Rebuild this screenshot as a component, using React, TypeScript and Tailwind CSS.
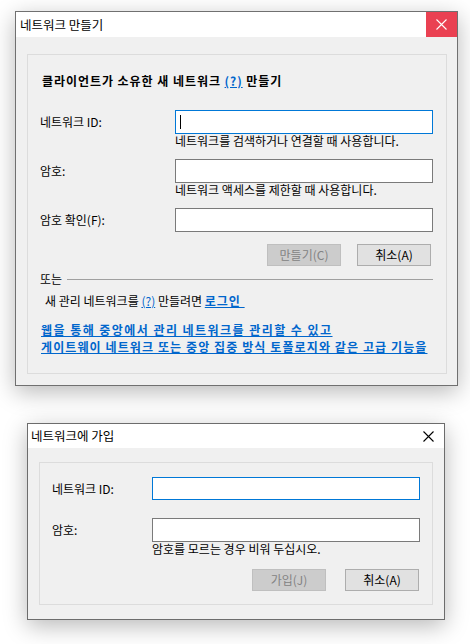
import React from "react";

const font = { fontFamily: '"Noto Sans CJK KR", "Noto Sans", sans-serif' };

function CloseGlyph({ color }: { color: string }) {
  return (
    <svg width="11" height="11" viewBox="0 0 11 11">
      <path d="M0.5 0.5 L10.5 10.5 M10.5 0.5 L0.5 10.5" stroke={color} strokeWidth="1.1" fill="none" />
    </svg>
  );
}

function Button({ label, disabled }: { label: string; disabled?: boolean }) {
  return (
    <div
      className={
        disabled
          ? "w-[74px] h-[22px] flex items-center justify-center border border-[#bfbfbf] bg-[#cccccc] text-[#838383] text-[12px]"
          : "w-[74px] h-[22px] flex items-center justify-center border border-[#adadad] bg-[#e1e1e1] text-black text-[12px]"
      }
    >
      {label}
    </div>
  );
}

function CreateNetworkDialog() {
  return (
    <div className="ml-[15px] w-[443px] border border-[#707070] bg-[#f0f0f0] shadow-[0_6px_22px_rgba(0,0,0,0.28)]">
      <div className="h-[25px] bg-white flex items-center justify-between">
        <span className="pl-[4px] text-[12.5px] leading-[16px] text-black">네트워크 만들기</span>
        <div className="w-[31px] h-[25px] bg-[#ea4152] flex items-center justify-center">
          <CloseGlyph color="#ffffff" />
        </div>
      </div>
      <div className="pt-[17px] pl-[11px] pr-[10px] pb-[11px]">
        <div className="h-[320px] border border-[#dcdcdc] pl-[12px] pr-[13px] flex flex-col">
          <div className="mt-[18px] pl-[2px] text-[12px] leading-[16px] font-bold tracking-[0.95px] text-black">
            클라이언트가 소유한 새 네트워크{" "}
            <span className="text-[#0066cc] underline">(?)</span> 만들기
          </div>

          <div className="mt-[21px] flex items-center">
            <div className="w-[135px] text-[12px] leading-[14px]">네트워크 ID:</div>
            <div className="w-[258px] h-[24px] border border-[#0078d7] bg-white flex items-center pl-[4px]">
              <span className="w-[1px] h-[14px] bg-black" />
            </div>
          </div>
          <div className="pl-[135px] text-[12px] leading-[14px]">
            네트워크를 검색하거나 연결할 때 사용합니다.
          </div>

          <div className="mt-[11px] flex items-center">
            <div className="w-[135px] text-[12px] leading-[14px]">암호:</div>
            <div className="w-[258px] h-[24px] border border-[#7a7a7a] bg-white" />
          </div>
          <div className="pl-[135px] text-[12px] leading-[14px]">
            네트워크 액세스를 제한할 때 사용합니다.
          </div>

          <div className="mt-[11px] flex items-center">
            <div className="w-[135px] text-[12px] leading-[14px]">암호 확인(F):</div>
            <div className="w-[258px] h-[24px] border border-[#7a7a7a] bg-white" />
          </div>

          <div className="mt-[12px] flex justify-end gap-[16px] pr-[2px]">
            <Button label="만들기(C)" disabled />
            <Button label="취소(A)" />
          </div>

          <div className="mt-[6px] flex items-center gap-[5px]">
            <span className="text-[12px] leading-[14px]">또는</span>
            <div className="flex-1 h-[1px] bg-[#a0a0a0]" />
          </div>

          <div className="mt-[8px] pl-[5px] text-[12px] leading-[14px]">
            새 관리 네트워크를 <span className="text-[#0066cc] underline">(?)</span> 만들려면{" "}
            <span className="text-[#0066cc] underline font-bold tracking-[1px]">로그인&nbsp;</span>
          </div>

          <div className="mt-[13px] pl-[1px] text-[12px] leading-[17px] font-bold text-[#0066cc] underline whitespace-nowrap">
            <div className="tracking-[1.45px]">웹을 통해 중앙에서 관리 네트워크를 관리할 수 있고</div>
            <div className="tracking-[1.1px]">게이트웨이 네트워크 또는 중앙 집중 방식 토폴로지와 같은 고급 기능을</div>
          </div>
        </div>
      </div>
    </div>
  );
}

function JoinNetworkDialog() {
  return (
    <div className="ml-[27px] w-[418px] border border-[#6c6c6c] bg-[#f0f0f0] shadow-[0_6px_22px_rgba(0,0,0,0.28)]">
      <div className="h-[24px] bg-white flex items-center justify-between">
        <span className="pl-[3px] text-[12.5px] leading-[16px] text-black">네트워크에 가입</span>
        <div className="w-[30px] h-[24px] flex items-center justify-center mr-[1px]">
          <CloseGlyph color="#000000" />
        </div>
      </div>
      <div className="pt-[14px] pl-[11px] pr-[11px] pb-[14px]">
        <div className="h-[143px] border border-[#dcdcdc] pl-[12px] flex flex-col">
          <div className="mt-[14px] flex items-center">
            <div className="w-[100px] text-[12px] leading-[14px]">네트워크 ID:</div>
            <div className="w-[268px] h-[23px] border border-[#0078d7] bg-white" />
          </div>

          <div className="mt-[18px] flex items-center">
            <div className="w-[100px] text-[12px] leading-[14px]">암호:</div>
            <div className="w-[268px] h-[24px] border border-[#7a7a7a] bg-white" />
          </div>
          <div className="pl-[100px] text-[12px] leading-[14px]">
            암호를 모르는 경우 비워 두십시오.
          </div>

          <div className="mt-[13px] flex gap-[19px] pl-[200px]">
            <Button label="가입(J)" disabled />
            <Button label="취소(A)" />
          </div>
        </div>
      </div>
    </div>
  );
}

export default function App() {
  return (
    <div className="w-[470px] h-[644px] bg-white overflow-hidden text-black" style={font}>
      <div className="pt-[11px]">
        <CreateNetworkDialog />
      </div>
      <div className="mt-[37px]">
        <JoinNetworkDialog />
      </div>
    </div>
  );
}
